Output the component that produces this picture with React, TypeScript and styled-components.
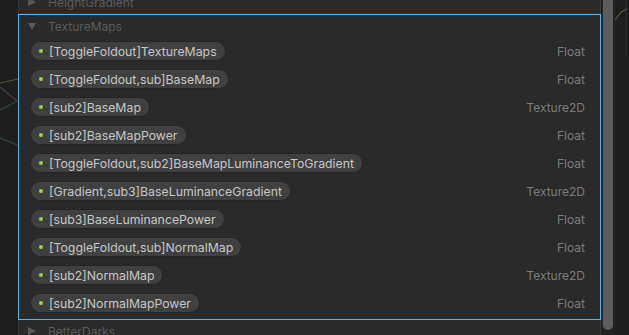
import { createGlobalStyle, styled } from "styled-components"

const Global = createGlobalStyle`
    html, body { margin: 0; padding: 0; background: #1e1e1e; }
    body { font-family: Inter, "Noto Sans", sans-serif; }
`

const Screen = styled.div`
    width: 629px;
    height: 335px;
    display: flex;
    overflow: hidden;
    background: #1e1e1e;
`

const GraphStrip = styled.div<{ $w: number }>`
    width: ${p => p.$w}px;
    flex-shrink: 0;
    position: relative;
    background: #1e1e1e;
    svg { display: block; }
`

const Inspector = styled.div`
    flex: 1;
    display: flex;
    flex-direction: column;
    background: #282828;
    overflow: hidden;
`

const Section = styled.div<{ $selected?: boolean; $clip?: number }>`
    flex-shrink: 0;
    border: 1px solid ${p => (p.$selected ? "#58b3ef" : "#3b3b3b")};
    border-top: ${p => (p.$selected ? "1px solid #58b3ef" : "none")};
    border-bottom: ${p => (p.$selected ? "1px solid #58b3ef" : "1px solid #303030")};
    margin-top: ${p => (p.$clip ? -p.$clip : 0)}px;
    padding-bottom: ${p => (p.$selected ? 2 : 0)}px;
    background: #2a2a2a;
`

const Header = styled.div`
    height: 22px;
    display: flex;
    align-items: center;
    gap: 12px;
    padding-left: 9px;
    color: #5a5a5a;
    font-size: 12px;
`

const Arrow = styled.span<{ $open?: boolean }>`
    width: 0;
    height: 0;
    border-style: solid;
    ${p =>
        p.$open
            ? `border-width: 7px 4.5px 0 4.5px; border-color: #585858 transparent transparent transparent;`
            : `border-width: 4.5px 0 4.5px 8px; border-color: transparent transparent transparent #585858;`}
`

const Row = styled.div`
    height: 28px;
    display: flex;
    align-items: center;
    justify-content: space-between;
    padding: 0 15px 0 11px;
`

const Pill = styled.div`
    height: 20px;
    box-sizing: border-box;
    display: flex;
    align-items: center;
    gap: 6px;
    padding: 0 8px 0 8px;
    border-radius: 10px;
    background: #404040;
    border: 1px solid #252525;
    color: #c6c6c6;
    font-size: 12.3px;
    white-space: nowrap;
`

const Dot = styled.span`
    width: 4px;
    height: 4px;
    border-radius: 50%;
    background: #8fd64a;
    flex-shrink: 0;
`

const TypeLabel = styled.span`
    color: #7b7b7b;
    font-size: 12px;
`

const ScrollTrack = styled.div`
    width: 14px;
    flex-shrink: 0;
    background: #232323;
    padding-left: 2px;
    box-sizing: border-box;
`

const Thumb = styled.div`
    width: 10px;
    height: 330px;
    background: #5d5d5d;
    border-radius: 0 0 5px 5px;
`

type Prop = { name: string; type: string }

const props: Prop[] = [
    { name: "[ToggleFoldout]TextureMaps", type: "Float" },
    { name: "[ToggleFoldout,sub]BaseMap", type: "Float" },
    { name: "[sub2]BaseMap", type: "Texture2D" },
    { name: "[sub2]BaseMapPower", type: "Float" },
    { name: "[ToggleFoldout,sub2]BaseMapLuminanceToGradient", type: "Float" },
    { name: "[Gradient,sub3]BaseLuminanceGradient", type: "Texture2D" },
    { name: "[sub3]BaseLuminancePower", type: "Float" },
    { name: "[ToggleFoldout,sub]NormalMap", type: "Float" },
    { name: "[sub2]NormalMap", type: "Texture2D" },
    { name: "[sub2]NormalMapPower", type: "Float" },
]

export default function App() {
    return (
        <Screen>
            <Global />
            <GraphStrip $w={18}>
                <svg width="18" height="335">
                    <line x1="0" y1="83" x2="18" y2="79" stroke="#55583e" strokeWidth="1" />
                    <line x1="0" y1="87" x2="17" y2="101" stroke="#5e4a55" strokeWidth="1" />
                    <line x1="0" y1="110" x2="17" y2="101" stroke="#2f5558" strokeWidth="1" />
                    <line x1="0" y1="138" x2="17" y2="145" stroke="#2f5558" strokeWidth="1" />
                </svg>
            </GraphStrip>
            <Inspector>
                <Section $clip={9}>
                    <Header>
                        <Arrow />
                        HeightGradient
                    </Header>
                </Section>
                <Section $selected>
                    <Header>
                        <Arrow $open />
                        TextureMaps
                    </Header>
                    {props.map((p, i) => (
                        <Row key={i}>
                            <Pill>
                                <Dot />
                                {p.name}
                            </Pill>
                            <TypeLabel>{p.type}</TypeLabel>
                        </Row>
                    ))}
                </Section>
                <Section>
                    <Header>
                        <Arrow />
                        BetterDarks
                    </Header>
                </Section>
            </Inspector>
            <ScrollTrack>
                <Thumb />
            </ScrollTrack>
            <GraphStrip $w={14}>
                <svg width="14" height="335">
                    <line x1="11" y1="0" x2="11" y2="58" stroke="#2e2e2e" strokeWidth="1" />
                    <polyline points="0,20 6,12 12,9" fill="none" stroke="#6b6a3c" strokeWidth="1" />
                </svg>
            </GraphStrip>
        </Screen>
    )
}
